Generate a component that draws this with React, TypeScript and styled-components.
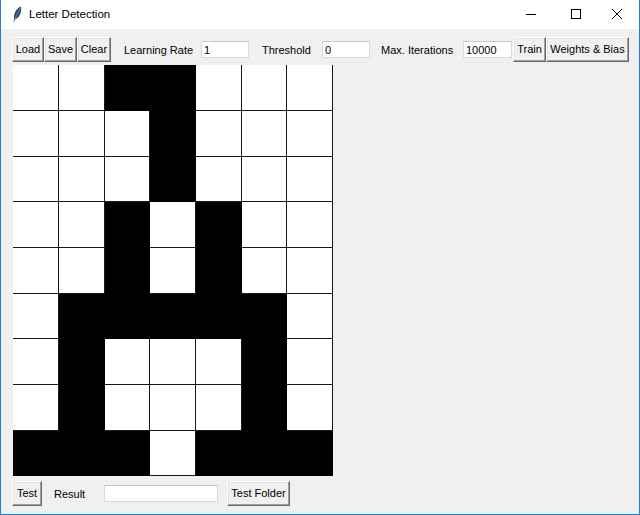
import React from "react";
import styled, { createGlobalStyle } from "styled-components";

const GlobalStyle = createGlobalStyle`
	html, body {
		margin: 0;
		padding: 0;
		background: #ffffff;
	}
	* {
		box-sizing: border-box;
	}
`;

// 1 = black cell
const pattern: number[][] = [
	[0, 0, 1, 1, 0, 0, 0],
	[0, 0, 0, 1, 0, 0, 0],
	[0, 0, 0, 1, 0, 0, 0],
	[0, 0, 1, 0, 1, 0, 0],
	[0, 0, 1, 0, 1, 0, 0],
	[0, 1, 1, 1, 1, 1, 0],
	[0, 1, 0, 0, 0, 1, 0],
	[0, 1, 0, 0, 0, 1, 0],
	[1, 1, 1, 0, 1, 1, 1],
];

const App: React.FC = () => {
	return (
		<>
			<GlobalStyle />
			<Window>
				<TitleBar>
					<Feather width="10" height="16" viewBox="0 0 10 16">
						<path
							d="M8.8 0.6 C5.6 2 3 5 2.2 9 C1.9 10.6 2 12 2.4 13 L1.3 15.6 L2 15.8 L3.1 13.4 C6.2 12.4 8.2 9 9 5.4 C9.4 3.6 9.4 1.8 8.8 0.6 Z"
							fill="#2d4a6b"
						/>
						<path d="M8.6 1.4 L3 13" stroke="#8aa4c0" strokeWidth="0.6" />
					</Feather>
					<Title>Letter Detection</Title>
					<Controls>
						<ControlButton $w={52}>
							<svg width="12" height="12" viewBox="0 0 12 12">
								<path d="M1 6.5 H11" stroke="#000" strokeWidth="1" />
							</svg>
						</ControlButton>
						<ControlButton $w={38}>
							<svg width="12" height="12" viewBox="0 0 12 12">
								<rect x="1.5" y="1.5" width="9" height="9" fill="none" stroke="#000" strokeWidth="1" />
							</svg>
						</ControlButton>
						<ControlButton $w={44}>
							<svg width="12" height="12" viewBox="0 0 12 12">
								<path d="M1 1 L11 11 M11 1 L1 11" stroke="#000" strokeWidth="1" />
							</svg>
						</ControlButton>
					</Controls>
				</TitleBar>

				<Body>
					<Toolbar>
						<Button $w={32}>Load</Button>
						<Button $w={33}>Save</Button>
						<Button $w={34}>Clear</Button>
						<Label $ml={13} $w={66}>Learning Rate</Label>
						<Entry $w={48} $ml={11} defaultValue="1" readOnly />
						<Label $ml={13} $w={48}>Threshold</Label>
						<Entry $w={48} $ml={12} defaultValue="0" readOnly />
						<Label $ml={11} $w={72}>Max. Iterations</Label>
						<Entry $w={49} $ml={10} defaultValue="10000" readOnly />
						<Button $w={33} $ml={1}>Train</Button>
						<Button $w={83}>Weights &amp; Bias</Button>
					</Toolbar>

					<Grid>
						{pattern.map((row, r) =>
							row.map((v, c) => <Cell key={`${r}-${c}`} $on={v === 1} />)
						)}
					</Grid>

					<BottomBar>
						<Button $w={30}>Test</Button>
						<Label $ml={12} $w={30}>Result</Label>
						<Entry $w={114} $ml={20} readOnly />
						<Button $w={63} $ml={9}>Test Folder</Button>
					</BottomBar>
				</Body>
			</Window>
		</>
	);
};

export default App;

const Window = styled.div`
	width: 640px;
	height: 515px;
	display: flex;
	flex-direction: column;
	border-left: 1px solid #1e80d6;
	border-right: 1px solid #1e80d6;
	border-bottom: 1px solid #1e80d6;
	background: #f0f0f0;
	font-family: "Liberation Sans", Arial, sans-serif;
	font-size: 11px;
	color: #000;
	overflow: hidden;
`;

const TitleBar = styled.div`
	height: 29px;
	flex-shrink: 0;
	display: flex;
	align-items: center;
	background: #ffffff;
	padding-left: 11px;
`;

const Feather = styled.svg`
	display: block;
	margin-bottom: 1px;
`;

const Title = styled.span`
	margin-left: 7px;
	font-size: 11.5px;
	line-height: 1;
`;

const Controls = styled.div`
	margin-left: auto;
	display: flex;
	height: 100%;
`;

const ControlButton = styled.div<{ $w: number }>`
	width: ${({ $w }) => $w}px;
	height: 100%;
	display: flex;
	align-items: center;
	justify-content: center;
	padding-bottom: 1px;
`;

const Body = styled.div`
	flex: 1;
	display: flex;
	flex-direction: column;
	padding: 8px 0 0 11px;
`;

const Toolbar = styled.div`
	display: flex;
	align-items: center;
	height: 25px;
`;

const Button = styled.div<{ $w: number; $ml?: number }>`
	width: ${({ $w }) => $w}px;
	height: 25px;
	flex-shrink: 0;
	display: flex;
	align-items: center;
	justify-content: center;
	padding-bottom: 1px;
	margin-left: ${({ $ml }) => $ml ?? 0}px;
	background: #f0f0f0;
	border-top: 1px solid #ffffff;
	border-left: 1px solid #ffffff;
	border-right: 1px solid #696969;
	border-bottom: 1px solid #696969;
	box-shadow: inset -1px -1px 0 #a0a0a0, inset 1px 1px 0 #e3e3e3;
	white-space: nowrap;
`;

const Label = styled.span<{ $w: number; $ml?: number }>`
	width: ${({ $w }) => $w}px;
	flex-shrink: 0;
	margin-left: ${({ $ml }) => $ml ?? 0}px;
	white-space: nowrap;
`;

const Entry = styled.input<{ $w: number; $ml?: number }>`
	width: ${({ $w }) => $w}px;
	height: 17px;
	flex-shrink: 0;
	margin-left: ${({ $ml }) => $ml ?? 0}px;
	padding: 0 2px;
	border: 1px solid #d9d9d9;
	border-top-color: #c8c8c8;
	background: #ffffff;
	font-family: inherit;
	font-size: 11px;
	color: #000;
	outline: none;
`;

const Grid = styled.div`
	margin-top: 3px;
	margin-left: 1px;
	display: grid;
	grid-template-columns: 46px 46px 45px 46px 46px 45px 46px;
	grid-template-rows: 46px 46px 45px 46px 46px 45px 46px 46px 45px;
	width: 320px;
`;

const Cell = styled.div<{ $on: boolean }>`
	background: ${({ $on }) => ($on ? "#000000" : "#ffffff")};
	border-right: 1px solid ${({ $on }) => ($on ? "#000000" : "#1a1a1a")};
	border-bottom: 1px solid ${({ $on }) => ($on ? "#000000" : "#1a1a1a")};
`;

const BottomBar = styled.div`
	display: flex;
	align-items: center;
	height: 25px;
	margin-top: 5px;
`;
